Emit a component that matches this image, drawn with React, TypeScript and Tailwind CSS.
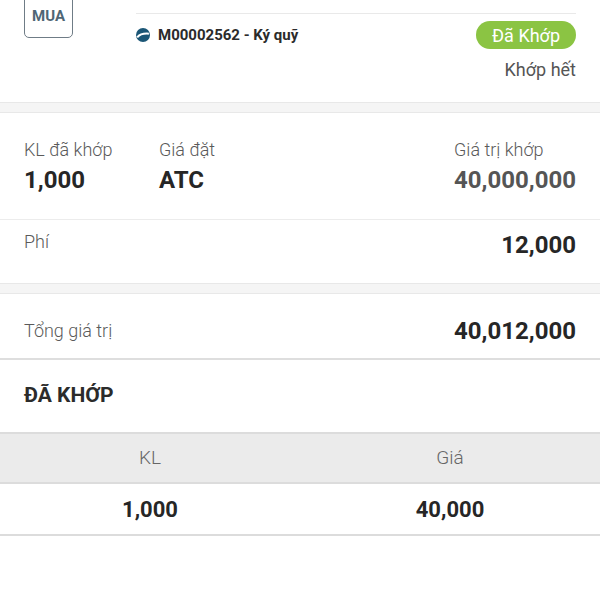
const label = "text-[18px] leading-[22px] font-light text-[#5a5a5a]";
const value = "text-[24px] leading-7 font-bold text-[#262626]";

function MarginIcon() {
  return (
    <svg width="14" height="14" viewBox="0 0 14 14" className="shrink-0">
      <circle cx="7" cy="7" r="7" fill="#1b5676" />
      <path d="M1.2 9.4 C3.6 6.4 7.6 5.3 12.9 5.7" stroke="#ffffff" strokeWidth="2" fill="none" />
    </svg>
  );
}

function Band() {
  return <div className="h-[11px] bg-[#f5f5f5] border-y border-[#e8e8e8]" />;
}

export default function App() {
  return (
    <main
      className="w-[600px] h-[600px] overflow-hidden bg-white"
      style={{ fontFamily: "Roboto, 'Noto Sans', sans-serif" }}
    >
      <div className="-mt-[14px]">
        {/* ORDER HEADER */}
        <section className="flex px-6 pb-[20px]">
          <div className="mt-[4px] w-[49px] h-[48px] shrink-0 rounded-[5px] border border-[#6f7c86] flex items-end justify-center pb-[13px]">
            <span className="text-[15px] leading-none font-bold text-[#4f6675]">MUA</span>
          </div>

          <div className="ml-[63px] flex-1">
            <div className="h-[28px] border-b border-[#e9e9e9]" />

            <div className="mt-[7px] flex items-center justify-between">
              <div className="flex items-center gap-[8px]">
                <MarginIcon />
                <span className="text-[15px] font-bold text-[#2b2b2b]">M00002562 - Ký quỹ</span>
              </div>
              <span className="h-[28px] px-[16px] rounded-full bg-[#8bc443] text-white text-[18px] flex items-center">
                Đã Khớp
              </span>
            </div>

            <div className="mt-[9px] text-right text-[18px] leading-[24px] text-[#555]">Khớp hết</div>
          </div>
        </section>

        <Band />

        {/* MATCH INFO */}
        <section className="px-6 pt-[26px] pb-[25px] flex border-b border-[#ececec]">
          <div className="w-[135px]">
            <div className={label}>KL đã khớp</div>
            <div className={`${value} mt-[5px]`}>1,000</div>
          </div>
          <div className="flex-1">
            <div className={label}>Giá đặt</div>
            <div className={`${value} mt-[5px]`}>ATC</div>
          </div>
          <div>
            <div className={label}>Giá trị khớp</div>
            <div className="text-[24px] leading-7 font-bold text-[#555] mt-[5px]">40,000,000</div>
          </div>
        </section>

        <section className="px-6 h-[63px] pt-[11px] flex items-start justify-between">
          <div className={label}>Phí</div>
          <div className={value}>12,000</div>
        </section>

        <Band />

        {/* TOTAL */}
        <section className="px-6 h-[66px] pt-[10px] flex items-center justify-between border-b-2 border-[#dedede]">
          <div className={label}>Tổng giá trị</div>
          <div className={value}>40,012,000</div>
        </section>

        <section className="px-6 h-[72px] flex items-center">
          <h2 className="text-[21px] font-bold text-[#2b2b2b]">ĐÃ KHỚP</h2>
        </section>

        {/* MATCHED TABLE */}
        <div className="grid grid-cols-2 h-[52px] bg-[#ebebeb] border-y-2 border-[#dcdcdc] items-center text-center">
          <div className="text-[19px] font-light text-[#666]">KL</div>
          <div className="text-[19px] font-light text-[#666]">Giá</div>
        </div>
        <div className="grid grid-cols-2 h-[52px] border-b-2 border-[#dcdcdc] items-center text-center">
          <div className="text-[22px] font-bold text-[#262626]">1,000</div>
          <div className="text-[22px] font-bold text-[#262626]">40,000</div>
        </div>
      </div>
    </main>
  );
}
